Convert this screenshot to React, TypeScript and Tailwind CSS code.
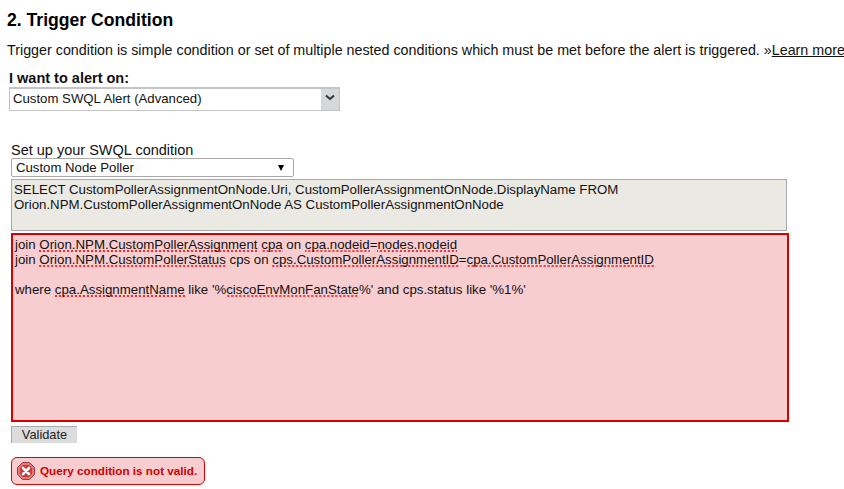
const sans = "font-['Liberation_Sans',Arial,sans-serif]";

function Squiggle({ children }: { children: string }) {
  return (
    <span className="bg-[linear-gradient(135deg,transparent_38%,#e62020_38%,#e62020_62%,transparent_62%),linear-gradient(45deg,transparent_38%,#e62020_38%,#e62020_62%,transparent_62%)] bg-[length:4px_2px] bg-repeat-x bg-bottom">
      {children}
    </span>
  );
}

function ErrorIcon() {
  return (
    <svg width="18" height="18" viewBox="0 0 18 18" className="shrink-0">
      <polygon points="5.5,0.5 12.5,0.5 17.5,5.5 17.5,12.5 12.5,17.5 5.5,17.5 0.5,12.5 0.5,5.5" fill="#e07a78" stroke="#a83a3a" />
      <polygon points="6,3 12,3 15,6 15,12 12,15 6,15 3,12 3,6" fill="#c73c3c" />
      <path d="M6 6 L12 12 M12 6 L6 12" stroke="#fff" strokeWidth="2.6" strokeLinecap="round" />
    </svg>
  );
}

export default function App() {
  return (
    <div className={`${sans} w-[844px] h-[489px] overflow-hidden bg-white text-[#111] pt-[10px] whitespace-nowrap`}>
      <h2 className="pl-[7px] text-[17.6px] leading-[20px] font-bold text-black">2. Trigger Condition</h2>
      <p className="pl-[7px] mt-[11px] text-[14.3px] leading-[18px]">
        Trigger condition is simple condition or set of multiple nested conditions which must be met before the alert is triggered. »<a className="underline">Learn more</a>
      </p>

      <div className="pl-[9px] mt-[12px] text-[14.5px] leading-[15px] font-bold">I want to alert on:</div>
      <div className="ml-[9px] mt-[1px] w-[331px] h-[24px] flex border border-[#c4c4c4] border-t-2 bg-white text-[13.2px]">
        <div className="flex-1 pl-[3px] leading-[19px]">Custom SWQL Alert (Advanced)</div>
        <div className="w-[18px] bg-[#d6d9dc] flex justify-center pt-[5px]">
          <svg width="10" height="7" viewBox="0 0 10 7"><path d="M1 1.5 L5 5 L9 1.5" fill="none" stroke="#333" strokeWidth="2" /></svg>
        </div>
      </div>

      <div className="pl-[11px] mt-[32px] text-[14.5px] leading-[15px]">Set up your SWQL condition</div>
      <div className="ml-[11px] w-[283px] h-[19px] flex items-center justify-between border border-[#a9a9a9] rounded-[2px] pl-[4px] pr-[9px] text-[13.2px]">
        <span>Custom Node Poller</span>
        <span className="w-0 h-0 border-x-[3.5px] border-x-transparent border-t-[6px] border-t-black" />
      </div>

      <div className="ml-[11px] mt-[2px] w-[776px] h-[52px] border border-[#a9a9a9] bg-[#ebe9e3] pl-[2px] pt-[2px] text-[13.25px] leading-[15px]">
        <div>SELECT CustomPollerAssignmentOnNode.Uri, CustomPollerAssignmentOnNode.DisplayName FROM</div>
        <div>Orion.NPM.CustomPollerAssignmentOnNode AS CustomPollerAssignmentOnNode</div>
      </div>

      <div className="ml-[11px] mt-[2px] w-[778px] h-[189px] border-2 border-[#d90000] bg-[#f8cdcf] pl-[2px] pt-[2px] text-[13.27px] leading-[15px]">
        <div>join <Squiggle>Orion.NPM.CustomPollerAssignment</Squiggle> <Squiggle>cpa</Squiggle> on <Squiggle>cpa.nodeid</Squiggle>=<Squiggle>nodes.nodeid</Squiggle></div>
        <div>join <Squiggle>Orion.NPM.CustomPollerStatus</Squiggle> cps on <Squiggle>cps.CustomPollerAssignmentID</Squiggle>=<Squiggle>cpa.CustomPollerAssignmentID</Squiggle></div>
        <div className="h-[15px]" />
        <div>where <Squiggle>cpa.AssignmentName</Squiggle> like '%<Squiggle>ciscoEnvMonFanState</Squiggle>%' and cps.status like '%1%'</div>
      </div>

      <button className="block ml-[11px] mt-[4px] w-[66px] h-[17px] bg-[#dcdcdc] border-t border-l border-[#a9a9a9] text-[12.8px] leading-[14px] text-center text-[#222]">Validate</button>

      <div className="ml-[11px] mt-[14px] w-[194px] h-[28px] flex items-center gap-[5px] pl-[5px] border border-[#d90000] rounded-[6px] bg-[#f8cdcf] text-[#d00000] text-[11.7px] font-bold">
        <ErrorIcon />
        <span>Query condition is not valid.</span>
      </div>
    </div>
  );
}
